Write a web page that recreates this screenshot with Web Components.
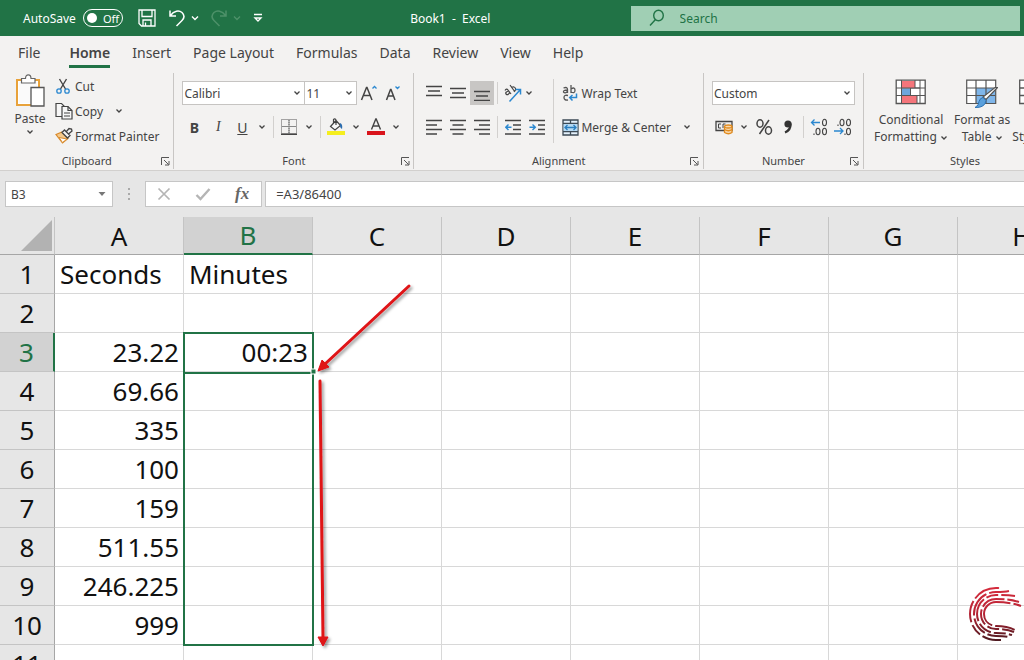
<!DOCTYPE html>
<html lang="en">
<head>
<meta charset="utf-8">
<title>Book1 - Excel</title>
<style>
    body{
        margin: 0;
        background-color: #e6e6e6;
        font-family: "Noto Sans", "Open Sans", sans-serif;
        font-size: 12px;
        color: #444;
    }
</style>
</head>
<body>
<xl-app></xl-app>

<script>
const ICONS = {
    chevron: [8, 8, `<path d="M1.5 2.5 4 5 6.5 2.5" fill="none" stroke="#444" stroke-width="1.3"/>`],
    save: [18, 18, `<g fill="none" stroke="#fff" stroke-width="1.3"><path d="M1 1h16v16H3.500L1 14.500zM4 1v6.500h10V1M5 17v-6h8v6M7.500 17v-3.500"/></g>`],
    undo: [18, 18, `<path d="M2 1.500V7h6M2.500 6.500C6 1.500 11 1 14 3.500c3 3 2 6 0 8L8.500 17" fill="none" stroke="#fff" stroke-width="1.500"/>`],
    redo: [18, 18, `<path d="M16 1.500V7h-6M15.500 6.500C12 1.500 7 1 4 3.500c-3 3-2 6 0 8L9.500 17" fill="none" stroke="#4d9169" stroke-width="1.500"/>`],
    chevronLight: [8, 8, `<path d="M1 2.500 4 5.500 7 2.500" fill="none" stroke="#fff" stroke-width="1.400"/>`],
    chevronDim: [8, 8, `<path d="M1 2.500 4 5.500 7 2.500" fill="none" stroke="#4d9169" stroke-width="1.400"/>`],
    customize: [10, 10, `<path d="M1 1.500h8M2 5l3 3 3-3z" fill="none" stroke="#fff" stroke-width="1.300"/>`],
    search: [16, 18, `<g fill="none" stroke="#217346" stroke-width="1.400"><ellipse cx="9.500" cy="6.500" rx="4.800" ry="5.300"/><path d="M6.500 10.500 1 16.500"/></g>`],
    paste: [30, 36, `<path d="M2 6h22v25H2z" fill="#fff" stroke="#e8a23a" stroke-width="2"/><path d="M4 8h18v21H4z" fill="#fafafa"/>
        <path d="M6.500 9V4.500h4C10.500 2 12 .8 13.200.8s2.800 1.200 2.800 3.700h4V9z" fill="#fff" stroke="#666" stroke-width="1.200"/>
        <path d="M16 13.500h13V32H16z" fill="#fff" stroke="#555" stroke-width="1.300"/>`],
    cut: [16, 16, `<path d="M4.500 1 10.500 11M11.500 1 5.500 11" stroke="#444" stroke-width="1.400" fill="none"/><g fill="none" stroke="#2b88d0" stroke-width="1.300"><circle cx="4" cy="13" r="2.200"/><circle cx="12" cy="13" r="2.200"/></g>`],
    copy: [18, 18, `<g fill="#f7f7f7" stroke="#444" stroke-width="1.200"><path d="M1 1.500h5.500L9 4v10.500H1z"/><path d="M7 4.500h6l4 4V17H7z"/><path d="M13 4.500v4h4M9 11h6M9 14h6" fill="none"/></g>`],
    painter: [18, 18, `<path d="M1 7.500 7 5l6 6.500L7.500 16z" fill="#f5c98b" stroke="#d98a2b" stroke-width="1.200"/><path d="M4 10.500 7.500 15.500 12 12z" fill="#fff" stroke="#d98a2b"/><path d="M7 5.500 9.500 3l5.500 5.500-2.500 2.500zM11 5l3-3.500 2.500.5.500 2-3.500 3" fill="#f3f2f1" stroke="#444" stroke-width="1.300"/>`],
    launcher: [9, 9, `<path d="M.5 8V.5H8M3 3l4.500 4.500M8 4v4H4" fill="none" stroke="#555"/>`],
    grow: [18, 18, `<path d="M1.500 16 6.500 3.500h.5L12 16M3.500 11.500H10" fill="none" stroke="#444" stroke-width="1.500"/><path d="M12.500 4.500 14.500 2.500 16.500 4.500" fill="none" stroke="#2b88d0" stroke-width="1.300"/>`],
    shrink: [18, 18, `<path d="M2.500 16 6.500 5.500h.5L11 16M4 12H9.500" fill="none" stroke="#444" stroke-width="1.500"/><path d="M11.500 2.500 13.500 4.500 15.500 2.500" fill="none" stroke="#2b88d0" stroke-width="1.300"/>`],
    borders: [16, 16, `<path d="M.5.5h15v14H.5zM8 1v14M1 7.500h14" fill="none" stroke="#555" stroke-dasharray="1 1"/><path d="M8 1v14M1 7.500h14" stroke="#888" fill="none"/><path d="M0 15.300h16" stroke="#444" stroke-width="1.400"/>`],
    fill: [18, 18, `<path d="M3.500 8.500 9 2.500l4.500 5-5.500 4.500zM6.500 5V1.500Q8 0 9 2v5" fill="#f8f8f8" stroke="#444" stroke-width="1.200"/><path d="M13 5q3 1 2 6-2-1-2-3z" fill="#2b6cae"/><path d="M0 13h18v4H0z" fill="#f5ee1e"/>`],
    fontColor: [18, 18, `<path d="M4.500 11.500 8.800 1h.4l4.300 10.500M6 8h6" fill="none" stroke="#444" stroke-width="1.400"/><path d="M0 13h18v4H0z" fill="#d9141c"/>`],
    top: [16, 16, `<path d="M0 1.500h16M2 6h12M0 10.500h16" stroke="#444" stroke-width="1.300"/>`],
    middle: [16, 16, `<path d="M0 3.500h16M2 8h12M0 12.500h16" stroke="#444" stroke-width="1.300"/>`],
    bottom: [16, 16, `<path d="M0 6.500h16M2 11h12M0 15.300h16" stroke="#444" stroke-width="1.300"/>`],
    left: [16, 16, `<path d="M0 1.500h16M0 6h11M0 10.500h16M0 15h11" stroke="#444" stroke-width="1.300"/>`],
    center: [16, 16, `<path d="M0 1.500h16M2.500 6h11M0 10.500h16M2.500 15h11" stroke="#444" stroke-width="1.300"/>`],
    right: [16, 16, `<path d="M0 1.500h16M5 6h11M0 10.500h16M5 15h11" stroke="#444" stroke-width="1.300"/>`],
    orient: [20, 20, `<g fill="none" stroke="#444" stroke-width="1.200"><path d="M2 7.500Q3.500 5 5 7l3 4M5.500 8Q2 9 3 11q2 2 3.500-1.500M7 2l5 7M8.500 4.500q3-1.500 4 1 .5 2.500-2 2.500"/></g><path d="M6.500 18.500 17 7M12.500 6.500H17.500V11.500" fill="none" stroke="#2b88d0" stroke-width="1.500"/>`],
    outdent: [16, 16, `<path d="M0 1.500h16M8 6h8M8 10.500h8M0 15h16" stroke="#444" stroke-width="1.300"/><path d="M6.500 8.200H.8M3.500 5.500.8 8.200 3.500 11" fill="none" stroke="#2b88d0" stroke-width="1.400"/>`],
    indent: [16, 16, `<path d="M0 1.500h16M9 6h7M9 10.500h7M0 15h16" stroke="#444" stroke-width="1.300"/><path d="M.5 8.200H6.500M3.500 5.500 6.300 8.200 3.500 11" fill="none" stroke="#2b88d0" stroke-width="1.400"/>`],
    wrap: [16, 18, `<g fill="none" stroke="#555" stroke-width="1.300"><path d="M1.500 4Q5.500 2.500 5.500 5.500V9M5.500 6Q1 6 1.500 8q1.500 2 4-.5M9 1v8M9 5q4-2.500 4 1.200T9 8M6 11.500q-4-1-4 2t4 2.500"/></g><path d="M14.500 9.500v4H8M10.500 11 7.700 13.500 10.500 16.500" fill="none" stroke="#2b88d0" stroke-width="1.500"/>`],
    merge: [17, 17, `<path d="M1 1h15v15H1zM1 4.500h15M1 12.500h15M8.500 1v3.500M8.500 12.500V16" fill="#e4f1fb" stroke="#3d4a55" stroke-width="1.300"/><path d="M1.600 5.100h13.800v6.800H1.600z" fill="#b5dbf5"/><path d="M3 8.500h11M5.500 6 3 8.500 5.500 11M11.500 6 14 8.500 11.500 11" fill="none" stroke="#2b7fc0" stroke-width="1.300"/>`],
    currency: [18, 16, `<path d="M1 2.500h16v9H1z" fill="#eee" stroke="#444" stroke-width="1.300"/><path d="M6 5H3.500v4H6M10.500 5H8v4" fill="none" stroke="#444"/><g fill="#f8d9ae" stroke="#e08a1e" stroke-width="1.300"><path d="M9.500 7.500v6q4 2.500 7.500 0v-6"/><ellipse cx="13.200" cy="7.500" rx="3.700" ry="1.500"/><path d="M9.500 10.500q4 2.500 7.500 0" fill="none"/></g>`],
    percent: [18, 18, `<g fill="none" stroke="#444" stroke-width="1.500"><ellipse cx="5" cy="5.500" rx="3" ry="3.700"/><ellipse cx="13.500" cy="12.500" rx="3" ry="3.700"/><path d="M14 2 4.500 16"/></g>`],
    comma: [10, 16, `<circle cx="5" cy="5" r="3.600" fill="#333"/><path d="M7.500 4.500Q8 11 2 13.500" fill="none" stroke="#333" stroke-width="2.200"/>`],
    incDec: [18, 18, `<g fill="none" stroke="#444" stroke-width="1.100"><ellipse cx="14.500" cy="4.500" rx="2" ry="3.200"/><ellipse cx="8" cy="13.500" rx="2" ry="3.200"/><ellipse cx="14.500" cy="13.500" rx="2" ry="3.200"/><path d="M4 15.500v1.500"/></g><path d="M10 4.500H1.500M4.500 1.500 1.500 4.500 4.500 7.500" fill="none" stroke="#2b88d0" stroke-width="1.300"/>`],
    decDec: [18, 18, `<g fill="none" stroke="#444" stroke-width="1.100"><ellipse cx="8" cy="4.500" rx="2" ry="3.200"/><ellipse cx="14.500" cy="4.500" rx="2" ry="3.200"/><ellipse cx="14.500" cy="13.500" rx="2" ry="3.200"/><path d="M4 6.500V8M11 15.500v1.500"/></g><path d="M0 13H9M6 10 9 13 6 16" fill="none" stroke="#2b88d0" stroke-width="1.300"/>`],
    conditional: [32, 30, `<path d="M1.200 1.200h29v23.300h-29z" fill="#fff" stroke="#555" stroke-width="1.300"/><path d="M6.500 1v23M25 1v23M1 9h29M1 16.500h29" fill="none" stroke="#555"/><path d="M7 2h13v7H7zM7 17h15v7H7z" fill="#f4757b"/><path d="M7 9.500h8v7H7z" fill="#6ea6dc"/><path d="M6.500 9h18.500M6.500 16.500h18.500M15.500 9v7.500M20 1v8M22 16.500V24" fill="none" stroke="#555"/>`],
    formatTable: [32, 30, `<path d="M.7 1.200h29v23.300H.7z" fill="#fff"/><path d="M10 9h19.500v15.500H10z" fill="#7fb6ea"/><path d="M.7 1.200h29v23.300H.7zM10 1v23M20 1v23M1 9h28M1 16.500h28" fill="none" stroke="#555" stroke-width="1.200"/><path d="M31.500 8.500 20 20.500l-3-2.500L29 8.500z" fill="#fff" stroke="#555" stroke-width="1.200"/><path d="M17 18.500 20 21.500Q19 29 9 28.500q4-2 4-6 1-3.500 4-4" fill="#5aa0dc" stroke="#2b72b5"/>`],
    cellStyles: [30, 30, `<path d="M.7 1.200h28v23.300h-28zM1 9h28M1 16.500h28M10 1v23" fill="#fff" stroke="#555" stroke-width="1.300"/>`],
    nameArrow: [8, 6, `<path d="M.5 1h7L4 5z" fill="#777"/>`],
    dots: [4, 14, `<path d="M1 1h2v2H1zM1 6h2v2H1zM1 11h2v2H1z" fill="#aaa"/>`],
    cancel: [14, 14, `<path d="M1.500 1.500 12.500 12.500M12.500 1.500 1.500 12.500" stroke="#b5b5b5" stroke-width="1.700"/>`],
    enter: [16, 14, `<path d="M1.500 8 5.500 12 14.500 2" fill="none" stroke="#b5b5b5" stroke-width="2.400"/>`],
    corner: [31, 31, `<path d="M31 0V31H0z" fill="#b2b2b2"/>`]
};

class XlIcon extends HTMLElement{
    constructor(){
        super();
        this.root = this.attachShadow({mode: "open"});
    }

    connectedCallback(){
        const [width, height, shape] = ICONS[this.getAttribute("name")];
        this.root.innerHTML = `
            <style>
                :host{ display: inline-flex; flex: none; }
                svg{ display: block; }
            </style>
            <svg width="${width}" height="${height}" viewBox="0 0 ${width} ${height}" aria-hidden="true">${shape}</svg>
        `;
    }
}

// real button, with an optional text label in the slot
class XlButton extends HTMLElement{
    constructor(){
        super();
        this.root = this.attachShadow({mode: "open"});
    }

    connectedCallback(){
        const icon = this.getAttribute("icon");
        const label = this.getAttribute("label");
        this.root.innerHTML = `
            <style>
                :host{ display: inline-flex; flex: none; width: var(--w, auto); height: 24px; }
                :host([big]){ height: auto; }
                button{
                    display: flex;
                    align-items: center;
                    justify-content: center;
                    gap: var(--gap, 2px);
                    width: 100%;
                    padding: 0;
                    border: 0;
                    background: none;
                    color: inherit;
                    font: inherit;
                    white-space: nowrap;
                }
                :host([text]) button{ justify-content: flex-start; }
                :host([big]) button{ flex-direction: column; justify-content: flex-start; }
                :host([pressed]) button{ background-color: #c8c6c4; }
            </style>
            <button type="button" ${label ? `aria-label="${label}"` : ""}>
                ${icon ? `<xl-icon name="${icon}"></xl-icon>` : ""}
                <slot></slot>
            </button>
        `;
    }
}

class XlSelect extends HTMLElement{
    constructor(){
        super();
        this.root = this.attachShadow({mode: "open"});
    }

    connectedCallback(){
        this.root.innerHTML = `
            <style>
                :host{ display: grid; grid-template-columns: 1fr 14px; align-items: center; height: 24px; background-color: #fff; border: 1px solid #c6c4c2; box-sizing: border-box; }
                select{
                    grid-area: 1 / 1 / 2 / 3;
                    width: 100%;
                    height: 100%;
                    padding: 0 1px;
                    border: 0;
                    appearance: none;
                    background: none;
                    color: inherit;
                    font: inherit;
                }
                xl-icon{ grid-area: 1 / 2; pointer-events: none; justify-self: center; }
            </style>
            <select aria-label="${this.getAttribute("label")}"><option>${this.getAttribute("value")}</option></select>
            <xl-icon name="chevron"></xl-icon>
        `;
    }
}

class XlTitleBar extends HTMLElement{
    constructor(){
        super();
        this.root = this.attachShadow({mode: "open"});
        this.root.innerHTML = `
            <style>
                :host{ display: grid; grid-template-columns: 270px 11fr 12fr; align-items: center; height: 36px; background-color: #217346; color: #fff; }
                .quick{ display: flex; align-items: center; padding-left: 23px; }
                label{ display: flex; align-items: center; gap: 7px; margin-right: 14px; }
                .toggle{ display: flex; align-items: center; gap: 6px; width: 38px; height: 16px; border: 1px solid #fff; border-radius: 9px; font-size: 11px; }
                input{ appearance: none; width: 10px; height: 10px; margin: 0 0 0 3px; border-radius: 50%; background-color: #fff; }
                .name{ text-align: center; white-space: pre; }
                .search{ display: flex; align-items: center; gap: 15px; height: 25px; margin-right: 4px; padding-left: 18px; background-color: #a0cfb4; }
                .search input{ flex: 1; min-width: 0; height: 100%; width: auto; margin: 0; border-radius: 0; padding: 0; border: 0; background: none; font: inherit; color: #217346; }
                .search input::placeholder{ color: #217346; opacity: 1; }
            </style>
            <div class="quick">
                <label>AutoSave <span class="toggle"><input type="checkbox">Off</span></label>
                <xl-button icon="save" label="Save" style="--w: 20px"></xl-button>
                <xl-button icon="undo" label="Undo" style="--w: 40px"></xl-button>
                <xl-button icon="chevronLight" label="Undo list" style="--w: 8px; margin-left: -6px"></xl-button>
                <xl-button icon="redo" label="Redo" style="--w: 40px"></xl-button>
                <xl-button icon="chevronDim" label="Redo list" style="--w: 8px; margin-left: -6px"></xl-button>
                <xl-button icon="customize" label="Customize toolbar" style="--w: 34px"></xl-button>
            </div>
            <div class="name">Book1  -  Excel</div>
            <div class="search">
                <xl-icon name="search"></xl-icon>
                <input type="search" aria-label="Search" placeholder="Search">
            </div>
        `;
    }
}

class XlTabs extends HTMLElement{
    constructor(){
        super();
        const tabs = ["File", "Home", "Insert", "Page Layout", "Formulas", "Data", "Review", "View", "Help"];
        this.root = this.attachShadow({mode: "open"});
        this.root.innerHTML = `
            <style>
                :host{ display: block; background-color: #f3f2f1; font-size: 14px; }
                nav{ display: flex; gap: 22px; padding: 7px 18px 0; }
                a{ height: 22px; line-height: 20px; color: inherit; text-decoration: none; border-bottom: 3px solid transparent; }
                a:first-child{ margin-right: 7px; }
                a.current{ font-weight: 600; border-color: #217346; }
            </style>
            <nav>${tabs.map(t => `<a href="#"${t === "Home" ? ` class="current"` : ""}>${t}</a>`).join("")}</nav>
        `;
    }
}

class XlGroup extends HTMLElement{
    constructor(){
        super();
        this.root = this.attachShadow({mode: "open"});
    }

    connectedCallback(){
        const launcher = this.hasAttribute("launcher");
        this.root.innerHTML = `
            <style>
                :host{ display: flex; flex-direction: column; flex: none; box-sizing: border-box; border-right: 1px solid #c8c6c4; }
                .content{ display: flex; height: 80px; padding: var(--pad, 0 8px); box-sizing: border-box; }
                .foot{ display: grid; grid-template-columns: 16px 1fr 16px; align-items: center; height: 16px; line-height: 16px; font-size: 11px; text-align: center; }
                .foot span{ grid-column: 2; }
                xl-button{ --w: 16px; height: 16px; }
            </style>
            <div class="content"><slot></slot></div>
            <div class="foot">
                <span>${this.getAttribute("name")}</span>
                ${launcher ? `<xl-button icon="launcher" label="${this.getAttribute("name")} settings"></xl-button>` : ""}
            </div>
        `;
    }
}

class XlRibbon extends HTMLElement{
    constructor(){
        super();
        this.root = this.attachShadow({mode: "open"});
        this.root.innerHTML = `
            <style>
                :host{ display: flex; padding: 5px 0 1px; background-color: #f3f2f1; border-bottom: 1px solid #d2d0ce; overflow: hidden; }
                .col{ display: flex; flex-direction: column; }
                .rows{ display: flex; flex-direction: column; gap: 10px; padding-top: 8px; }
                .row{ display: flex; align-items: center; height: 24px; }
                .sep{ width: 1px; height: 22px; background-color: #d2d0ce; flex: none; }
                .sep.tall{ height: 64px; margin-top: 6px; }
                .sq{ --w: 24px; }
                .drop{ --w: 16px; }
                .letter{ font-size: 14px; }
                .paste{ --w: 34px; --gap: 1px; margin-right: 8px; line-height: 16px; }
                .clip{ gap: 1px; }
                .big{ --gap: 2px; text-align: center; line-height: 17px; }
                .big span xl-icon{ vertical-align: middle; }
                .styles{ border-right: 0; }
            </style>
            <xl-group name="Clipboard" launcher style="--pad: 1px 14px 0 13px">
                <xl-button class="paste" big icon="paste"><span>Paste</span><xl-icon name="chevron"></xl-icon></xl-button>
                <div class="col clip">
                    <xl-button text icon="cut" style="--gap: 4px">Cut</xl-button>
                    <div class="row">
                        <xl-button text icon="copy">Copy</xl-button>
                        <xl-button class="drop" icon="chevron" label="Copy options" style="margin-left: 8px"></xl-button>
                    </div>
                    <xl-button text icon="painter">Format Painter</xl-button>
                </div>
            </xl-group>
            <xl-group name="Font" launcher style="--pad: 0 8px">
                <div class="rows">
                    <div class="row">
                        <xl-select label="Font" value="Calibri" style="width: 123px"></xl-select>
                        <xl-select label="Font size" value="11" style="width: 53px; margin-left: -1px"></xl-select>
                        <xl-button class="sq" icon="grow" label="Increase font size"></xl-button>
                        <xl-button class="sq" icon="shrink" label="Decrease font size"></xl-button>
                    </div>
                    <div class="row">
                        <xl-button class="sq letter"><b>B</b></xl-button>
                        <xl-button class="sq letter"><i style="font-family: 'Liberation Serif', serif">I</i></xl-button>
                        <xl-button class="sq letter"><u>U</u></xl-button>
                        <xl-button class="drop" icon="chevron" label="Underline options"></xl-button>
                        <div class="sep" style="margin: 0 3px"></div>
                        <xl-button class="sq" icon="borders" label="Borders"></xl-button>
                        <xl-button class="drop" icon="chevron" label="Border options"></xl-button>
                        <div class="sep" style="margin: 0 3px"></div>
                        <xl-button class="sq" icon="fill" label="Fill colour"></xl-button>
                        <xl-button class="drop" icon="chevron" label="Fill options"></xl-button>
                        <xl-button class="sq" icon="fontColor" label="Font colour"></xl-button>
                        <xl-button class="drop" icon="chevron" label="Font colour options"></xl-button>
                    </div>
                </div>
            </xl-group>
            <xl-group name="Alignment" launcher>
                <div class="rows">
                    <div class="row">
                        <xl-button class="sq" icon="top" label="Top align"></xl-button>
                        <xl-button class="sq" icon="middle" label="Middle align"></xl-button>
                        <xl-button class="sq" pressed icon="bottom" label="Bottom align"></xl-button>
                        <div class="sep" style="margin: 0 3px"></div>
                        <xl-button class="sq" icon="orient" label="Orientation"></xl-button>
                        <xl-button class="drop" icon="chevron" label="Orientation options" style="margin-left: -4px"></xl-button>
                    </div>
                    <div class="row">
                        <xl-button class="sq" icon="left" label="Align left"></xl-button>
                        <xl-button class="sq" icon="center" label="Center"></xl-button>
                        <xl-button class="sq" icon="right" label="Align right"></xl-button>
                        <div class="sep" style="margin: 0 3px"></div>
                        <xl-button class="sq" icon="outdent" label="Decrease indent"></xl-button>
                        <xl-button class="sq" icon="indent" label="Increase indent"></xl-button>
                    </div>
                </div>
                <div class="sep tall" style="margin-left: 4px; margin-right: 8px"></div>
                <div class="rows">
                    <xl-button text icon="wrap" style="--gap: 3px">Wrap Text</xl-button>
                    <div class="row">
                        <xl-button text icon="merge" style="--gap: 2px">Merge &amp; Center</xl-button>
                        <xl-button class="drop" icon="chevron" label="Merge options" style="margin-left: 8px"></xl-button>
                    </div>
                </div>
            </xl-group>
            <xl-group name="Number" launcher>
                <div class="rows">
                    <xl-select label="Number format" value="Custom"></xl-select>
                    <div class="row">
                        <xl-button class="sq" icon="currency" label="Accounting format"></xl-button>
                        <xl-button class="drop" icon="chevron" label="Accounting options"></xl-button>
                        <xl-button class="sq" icon="percent" label="Percent style"></xl-button>
                        <xl-button class="sq" icon="comma" label="Comma style"></xl-button>
                        <div class="sep" style="margin: 0 3px"></div>
                        <xl-button class="sq" icon="incDec" label="Increase decimal"></xl-button>
                        <xl-button class="sq" icon="decDec" label="Decrease decimal"></xl-button>
                    </div>
                </div>
            </xl-group>
            <xl-group class="styles" name="Styles" style="--pad: 6px 10px 0">
                <xl-button class="big" big icon="conditional"><span>Conditional<br>Formatting <xl-icon name="chevron"></xl-icon></span></xl-button>
                <xl-button class="big" big icon="formatTable" style="margin-left: 6px"><span>Format as<br>Table <xl-icon name="chevron"></xl-icon></span></xl-button>
                <xl-button class="big" big icon="cellStyles" style="margin-left: 2px"><span>Cell<br>Styles <xl-icon name="chevron"></xl-icon></span></xl-button>
            </xl-group>
        `;
    }
}

class XlFormulaBar extends HTMLElement{
    constructor(){
        super();
        this.root = this.attachShadow({mode: "open"});
        this.root.innerHTML = `
            <style>
                :host{ display: flex; align-items: stretch; height: 26px; padding: 10px 0 10px 5px; background-color: #e6e6e6; }
                .box{ display: flex; align-items: center; background-color: #fff; border: 1px solid #c6c6c6; box-sizing: border-box; }
                .name{ width: 108px; padding-right: 6px; }
                .dots{ display: flex; align-items: center; margin: 0 14px; }
                .tools{ gap: 24px; padding: 0 12px 0 11px; margin-right: 3px; }
                .formula{ flex: 1; border-right: 0; }
                input{ flex: 1; min-width: 0; height: 100%; box-sizing: border-box; border: 0; padding: 0 5px; background: none; font: inherit; color: inherit; }
                .formula input{ padding: 0 10px; font-size: 13px; }
                .fx{ font: italic 700 17px "Liberation Serif", serif; color: #666; }
            </style>
            <div class="box name"><input aria-label="Name box" value="B3"><xl-icon name="nameArrow"></xl-icon></div>
            <div class="dots"><xl-icon name="dots"></xl-icon></div>
            <div class="box tools">
                <xl-button icon="cancel" label="Cancel"></xl-button>
                <xl-button icon="enter" label="Enter"></xl-button>
                <xl-button class="fx">fx</xl-button>
            </div>
            <div class="box formula"><input aria-label="Formula" value="=A3/86400"></div>
        `;
    }
}

class XlSheet extends HTMLElement{
    constructor(){
        super();
        this.root = this.attachShadow({mode: "open"});
        this._render();
    }

    _render(){
        const cols = ["A", "B", "C", "D", "E", "F", "G", "H"];
        const data = [
            ["Seconds", "Minutes"], [], ["23.22", "00:23"], ["69.66"], ["335"],
            ["100"], ["159"], ["511.55"], ["246.225"], ["999"], []
        ];
        const rows = data.map((row, i) => `
            <tr class="${i === 2 ? "current" : ""}">
                <th scope="row">${i + 1}</th>
                ${cols.map((c, j) => `<td class="${i === 0 ? "text" : ""}">${row[j] || ""}</td>`).join("")}
            </tr>
        `).join("");

        // rings of the C mark: radius, upper end, lower end, dashes
        const rings = [
            [26, [998, 588], [1001, 640], "26 3 22 3 12 3"],
            [22, [1009, 591], [1008, 637], "20 3 26 3 18 3"],
            [19, [1015, 596], [1012, 635], "14 3 12 3 24 3"],
            [15, [1019, 602], [1014, 632], "12 3 24 3 16 3"],
            [12, [1021, 606], [1015, 630], "8 3 48 3 20 3"]
        ].map(([r, up, low, dash]) => `
            <path stroke-dasharray="${dash}" d="M${up} Q${(996 + up[0]) / 2 + 2} ${614 - r} 996 ${614 - r} A${r} ${r} 0 0 0 996 ${614 + r} Q${(996 + low[0]) / 2 + 2} ${614 + r} ${low}"/>
        `).join("");

        this.root.innerHTML = `
            <style>
                :host{ display: block; position: relative; overflow: hidden; }
                table{ table-layout: fixed; width: 1087px; border-spacing: 0; background-color: #fff; color: #111; font-size: 26px; line-height: 36px; }
                col.head{ width: 55px; }
                th, td{ height: 39px; padding: 0; box-sizing: border-box; border-right: 1px solid #d8d8d8; border-bottom: 1px solid #d8d8d8; overflow: hidden; }
                th{ background-color: #e6e6e6; font-weight: 400; border-color: #c4c4c4; }
                thead th{ height: 38px; border-bottom-color: #a6a6a6; }
                tbody th{ border-right-color: #a6a6a6; }
                td{ padding: 0 4px 0 5px; text-align: right; }
                td.text{ text-align: left; }
                thead th.current{ background-color: #d2d2d2; color: #217346; border-bottom: 2px solid #217346; }
                .current th{ background-color: #d2d2d2; color: #217346; border-right: 2px solid #217346; }
                .corner xl-icon{ display: flex; justify-content: flex-end; padding-right: 2px; }
                /* range B3:B10 with its active cell */
                .range{ position: absolute; left: 183px; top: 115px; width: 131px; height: 314px; box-sizing: border-box; border: 2px solid #217346; }
                .active{ height: 38px; border-bottom: 2px solid #217346; }
                .marks{ position: absolute; left: 0; top: 0; }
            </style>
            <table>
                <colgroup><col class="head">${cols.map(() => `<col>`).join("")}</colgroup>
                <thead>
                    <tr>
                        <th class="corner"><xl-icon name="corner"></xl-icon></th>
                        ${cols.map(c => `<th scope="col" class="${c === "B" ? "current" : ""}">${c}</th>`).join("")}
                    </tr>
                </thead>
                <tbody>${rows}</tbody>
            </table>
            <div class="range"><div class="active"></div></div>
            <svg class="marks" width="1024" height="443" viewBox="0 217 1024 443" aria-hidden="true">
                <defs>
                    <filter id="shadow" filterUnits="userSpaceOnUse" x="300" y="270" width="130" height="390">
                        <feDropShadow dx="2" dy="2" stdDeviation="1.5" flood-opacity=".4"/>
                    </filter>
                    <linearGradient id="ink" gradientUnits="userSpaceOnUse" x1="0" y1="588" x2="0" y2="640">
                        <stop offset="0" stop-color="#d42b3c"/>
                        <stop offset=".5" stop-color="#b52435"/>
                        <stop offset="1" stop-color="#4f1a20"/>
                    </linearGradient>
                </defs>
                <rect x="311" y="369" width="5" height="5" fill="#217346" stroke="#fff"/>
                <g filter="url(#shadow)" fill="#df1219" stroke="#df1219">
                    <path d="M409 286 325 364" stroke-width="3" stroke-linecap="round"/>
                    <path d="M318 371 322 360 329 367z"/>
                    <path d="M320 381 323 638" stroke-width="3" stroke-linecap="round"/>
                    <path d="M323 646 318 637H328z"/>
                </g>
                <g fill="none" stroke="url(#ink)" stroke-width="2">${rings}</g>
            </svg>
        `;
    }
}

class XlApp extends HTMLElement{
    constructor(){
        super();
        this.root = this.attachShadow({mode: "open"});
        this.root.innerHTML = `
            <style>
                :host{ display: flex; flex-direction: column; height: 100vh; overflow: hidden; }
                xl-title-bar, xl-tabs, xl-ribbon, xl-formula-bar{ flex: none; }
                xl-sheet{ flex: 1; min-height: 0; }
            </style>
            <xl-title-bar></xl-title-bar>
            <xl-tabs></xl-tabs>
            <xl-ribbon></xl-ribbon>
            <xl-formula-bar></xl-formula-bar>
            <xl-sheet></xl-sheet>
        `;
    }
}

window.customElements.define("xl-icon", XlIcon);
window.customElements.define("xl-button", XlButton);
window.customElements.define("xl-select", XlSelect);
window.customElements.define("xl-title-bar", XlTitleBar);
window.customElements.define("xl-tabs", XlTabs);
window.customElements.define("xl-group", XlGroup);
window.customElements.define("xl-ribbon", XlRibbon);
window.customElements.define("xl-formula-bar", XlFormulaBar);
window.customElements.define("xl-sheet", XlSheet);
window.customElements.define("xl-app", XlApp);
</script>
</body>
</html>
